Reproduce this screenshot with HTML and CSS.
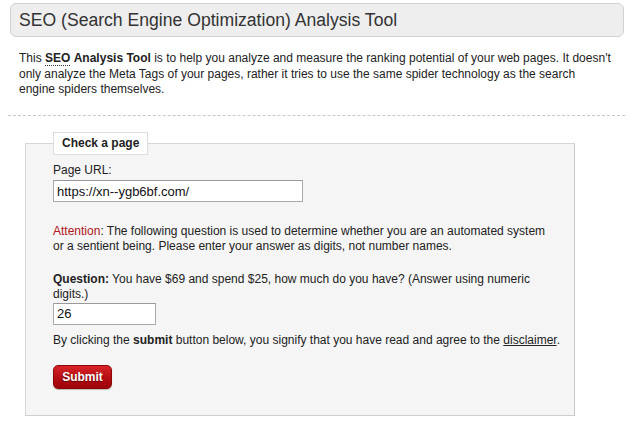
FILE: index.html
```html
<!DOCTYPE html>
<html>
<head>
<meta charset="utf-8">
<link rel="stylesheet" href="styles.css">
</head>
<body>
<div class="page">
  <h1 class="title">SEO (Search Engine Optimization) Analysis Tool</h1>
  <p class="intro">This <abbr class="abbr" title="Search Engine Optimization">SEO</abbr> <b>Analysis Tool</b> is to help you analyze and measure the ranking potential of your web pages. It doesn't only analyze the Meta Tags of your pages, rather it tries to use the same spider technology as the search engine spiders themselves.</p>
  <div class="sep"></div>
  <form class="form">
    <fieldset class="box">
      <legend class="legend">Check a page</legend>
      <label class="label" for="url">Page URL:</label>
      <input class="field url" id="url" type="text" value="https://xn--ygb6bf.com/">
      <p class="note"><span class="attn">Attention</span>: The following question is used to determine whether you are an automated system or a sentient being. Please enter your answer as digits, not number names.</p>
      <p class="question"><b>Question:</b> You have $69 and spend $25, how much do you have? (Answer using numeric digits.)</p>
      <input class="field answer" type="text" value="26">
      <p class="agree">By clicking the <b>submit</b> button below, you signify that you have read and agree to the <a class="link" href="#">disclaimer</a>.</p>
      <button class="submit" type="button">Submit</button>
    </fieldset>
  </form>
</div>
</body>
</html>
```

FILE: styles.css
```css
html, body {
  margin: 0;
  padding: 0;
  background: #fff;
}
.page {
  font-family: "Liberation Sans", Arial, sans-serif;
  font-size: 12px;
  line-height: 15.5px;
  color: #222;
  padding-top: 3px;
}
.title {
  margin: 0 9px 0 10px;
  height: 32px;
  line-height: 32px;
  padding: 0 8px;
  font-size: 17.6px;
  font-weight: normal;
  color: #333;
  background: #eeeeee;
  border: 1px solid #d2d2d2;
  border-radius: 6px;
}
.intro {
  margin: 14px 20px 0 19px;
}
.abbr {
  font-weight: bold;
  text-decoration: none;
  border-bottom: 1px dotted #333;
}
.sep {
  margin: 17px 8px 0 8px;
  border-top: 1px dashed #c8c8c8;
}
.form {
  margin: 16px 0 0 25px;
  width: 550px;
}
.box {
  margin: 0;
  padding: 8px 11px 26px 27px;
  background: #f5f5f5;
  border: 1px solid #d6d6d6;
  border-right-color: #c8c8c8;
  border-bottom-color: #cfcfcf;
  min-inline-size: 0;
}
.legend {
  padding: 0 8px;
  line-height: 21px;
  font-weight: bold;
  background: #fff;
  border: 1px solid #ddd;
  color: #222;
}
.label {
  display: block;
}
.field {
  display: block;
  box-sizing: border-box;
  height: 22px;
  margin: 2px 0 0 0;
  padding: 0 3px;
  font-family: "Liberation Sans", Arial, sans-serif;
  font-size: 13px;
  color: #111;
  background: #fff;
  border: 1px solid #a9a9a9;
  border-top-color: #9a9a9a;
  border-radius: 0;
}
.url {
  width: 250px;
}
.answer {
  width: 103px;
  margin-top: 0;
}
.note {
  margin: 21.5px 6px 0 0;
}
.attn {
  color: #b0161c;
}
.question {
  margin: 17px 0 0 0;
}
.agree {
  margin: 8px 0 0 0;
}
.link {
  color: #222;
  text-decoration: underline;
}
.submit {
  display: block;
  margin-top: 16.5px;
  width: 59px;
  height: 24px;
  padding: 0;
  font-family: "Liberation Sans", Arial, sans-serif;
  font-size: 12px;
  font-weight: bold;
  color: #fff;
  text-shadow: 0 1px 1px #600;
  background: linear-gradient(#d8242a, #b30d12 55%, #9c0408);
  border: 1px solid #8e0508;
  border-radius: 5px;
  box-shadow: 0 1px 1px rgba(0,0,0,0.25);
}
```
